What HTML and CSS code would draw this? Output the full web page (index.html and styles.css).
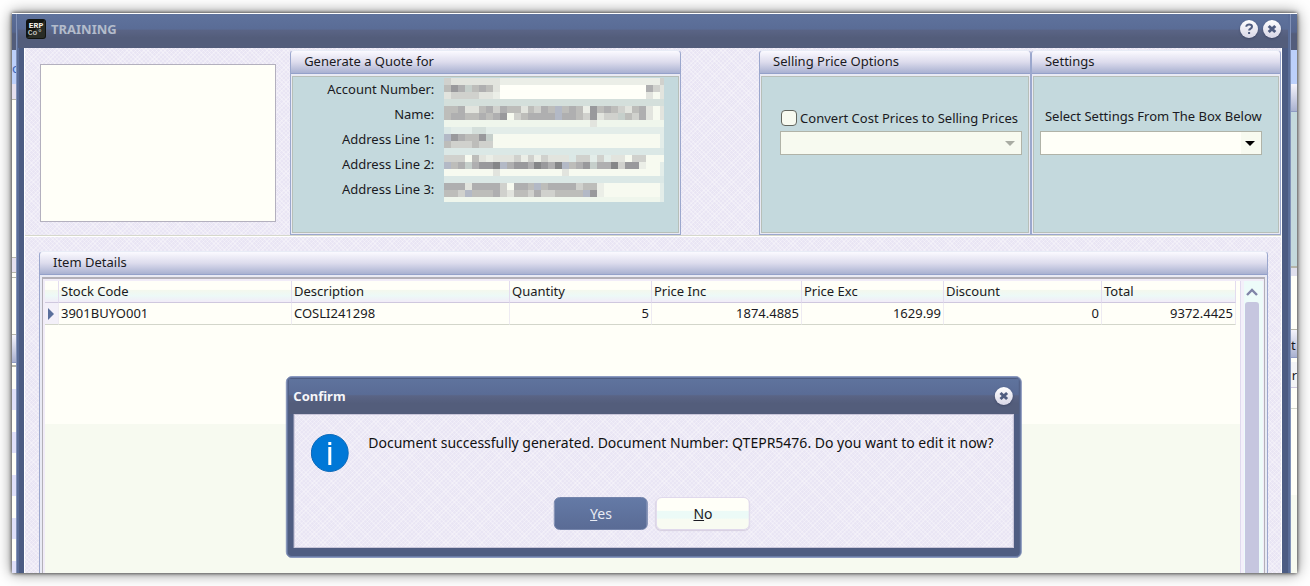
FILE: index.html
```html
<!DOCTYPE html>
<html lang="en">
<head>
    <meta charset="UTF-8">
    <meta name="viewport" content="width=device-width, initial-scale=1.0">
    <title>Training</title>
    <link rel="stylesheet" href="styles.css">
</head>
<body>

<div class="stage">
    <div class="edge edge-left">
        <div class="edge-title"></div>
        <div class="edge-menu">o</div>
        <div class="edge-texture"></div>
        <div class="edge-blank"></div>
        <div class="edge-texture edge-small"></div>
        <div class="edge-blank edge-short"></div>
        <div class="edge-heading"></div>
        <div class="edge-stripes"></div>
    </div>

    <main class="window">
        <header class="title-bar">
            <svg class="app-icon" width="20" height="20" viewBox="0 0 20 20" aria-hidden="true">
                <rect width="20" height="20" rx="3" fill="#11130f"/>
                <path d="M1 19L19 1V17a2 2 0 0 1-2 2z" fill="#292c26"/>
                <text x="10" y="9" text-anchor="middle" class="icon-text">ERP</text>
                <text x="9" y="16" text-anchor="middle" class="icon-text icon-text-soft">Co°</text>
            </svg>
            <h1>TRAINING</h1>
            <button class="round-btn" aria-label="Help">
                <svg width="18" height="18" viewBox="0 0 18 18"><path d="M6.3 6.7C6.3 3.6 12 3.7 12 6.7C12 8.6 9.1 8.5 9.1 10.6M9.1 12v2" fill="none" stroke="#505d80" stroke-width="2"/></svg>
            </button>
            <button class="round-btn" aria-label="Close">
                <svg width="18" height="18" viewBox="0 0 18 18"><path d="M5.7 6l6.6 6M12.3 6l-6.6 6" fill="none" stroke="#505d80" stroke-width="3"/></svg>
            </button>
        </header>

        <div class="content">
            <section class="top-area">
                <div class="preview"></div>

                <div class="panel quote-panel">
                    <h2>Generate a Quote for</h2>
                    <div class="panel-body quote-body">
                        <div class="labels">
                            <label for="account">Account Number:</label>
                            <label for="name">Name:</label>
                            <label for="address1">Address Line 1:</label>
                            <label for="address2">Address Line 2:</label>
                            <label for="address3">Address Line 3:</label>
                        </div>
                        <div class="fields">
                            <input type="text" id="account">
                            <input type="text" id="name">
                            <input type="text" id="address1">
                            <input type="text" id="address2">
                            <input type="text" id="address3">
                            <svg class="mosaic" id="mosaic" viewBox="0 0 221 124" preserveAspectRatio="none" shape-rendering="crispEdges" aria-hidden="true"></svg>
                        </div>
                    </div>
                </div>

                <div class="panel price-panel">
                    <h2>Selling Price Options</h2>
                    <div class="panel-body price-body">
                        <div class="check-row">
                            <input type="checkbox" id="convert">
                            <label for="convert">Convert Cost Prices to Selling Prices</label>
                        </div>
                        <div class="select-box disabled">
                            <select aria-label="Selling price" disabled><option></option></select>
                        </div>
                    </div>
                </div>

                <div class="panel settings-panel">
                    <h2>Settings</h2>
                    <div class="panel-body settings-body">
                        <label for="settings">Select Settings From The Box Below</label>
                        <div class="select-box">
                            <select id="settings"><option></option></select>
                        </div>
                    </div>
                </div>
            </section>

            <section class="panel items-panel">
                <h2>Item Details</h2>
                <div class="items-body">
                    <div class="grid">
                        <table>
                            <colgroup>
                                <col class="col-mark"><col class="col-stock"><col class="col-desc"><col class="col-qty">
                                <col class="col-inc"><col class="col-exc"><col class="col-disc"><col class="col-total">
                            </colgroup>
                            <thead>
                                <tr>
                                    <th></th>
                                    <th>Stock Code</th>
                                    <th>Description</th>
                                    <th>Quantity</th>
                                    <th>Price Inc</th>
                                    <th>Price Exc</th>
                                    <th>Discount</th>
                                    <th>Total</th>
                                </tr>
                            </thead>
                            <tbody>
                                <tr>
                                    <td class="mark"><svg width="6" height="12" viewBox="0 0 6 12" aria-hidden="true"><path d="M0 0l6 6-6 6z" fill="#5a6f9c"/></svg></td>
                                    <td>3901BUYO001</td>
                                    <td>COSLI241298</td>
                                    <td class="num">5</td>
                                    <td class="num">1874.4885</td>
                                    <td class="num">1629.99</td>
                                    <td class="num">0</td>
                                    <td class="num">9372.4425</td>
                                </tr>
                            </tbody>
                        </table>
                    </div>
                    <div class="scrollbar">
                        <svg width="12" height="8" viewBox="0 0 12 8" aria-hidden="true"><path d="M1 7l5-5 5 5" fill="none" stroke="#8084a8" stroke-width="2.4"/></svg>
                        <div class="thumb"></div>
                    </div>
                </div>
            </section>
        </div>

        <div class="dialog" role="dialog" aria-labelledby="dialog-title">
            <header class="dialog-title">
                <h2 id="dialog-title">Confirm</h2>
                <button class="round-btn" aria-label="Close dialog">
                    <svg width="18" height="18" viewBox="0 0 18 18"><path d="M5.7 6l6.6 6M12.3 6l-6.6 6" fill="none" stroke="#505d80" stroke-width="3"/></svg>
                </button>
            </header>
            <div class="dialog-body">
                <div class="message">
                    <svg width="38" height="38" viewBox="0 0 38 38" aria-hidden="true">
                        <circle cx="19" cy="19" r="18.5" fill="#0078d7" stroke="#0a68b8"/>
                        <path d="M19 13v18M19 8v3" stroke="#fff" stroke-width="3"/>
                    </svg>
                    <p>Document successfully generated. Document Number: QTEPR5476. Do you want to edit it now?</p>
                </div>
                <div class="actions">
                    <button class="btn btn-yes"><u>Y</u>es</button>
                    <button class="btn btn-no"><u>N</u>o</button>
                </div>
            </div>
        </div>
    </main>

    <div class="edge edge-right">
        <div class="edge-title"></div>
        <div class="edge-menu"></div>
        <div class="edge-heading"></div>
        <div class="edge-teal"></div>
        <div class="edge-blank"></div>
        <div class="edge-heading edge-caption">t</div>
        <div class="edge-column">ur</div>
        <div class="edge-line"></div>
        <div class="edge-rest"></div>
    </div>
</div>

<script>
// one letter per 7px cell
const colors = {
    x: '#858688', a: '#99999c', b: '#afafb0', c: '#bdbdba', d: '#d0d1cd', e: '#e2e4de',
    f: '#ebeee7', g: '#eff6ec', h: '#f7faf0', w: '#fffff8', k: '#dbe8e6', m: '#e3ede9',
    n: '#d4dfdb', s: '#b3b9c6', t: '#c6cfcb'
};
const rows = [
    'deeeeeee' + 'f'.repeat(23) + 'd',
    'cabtcbce' + 'w'.repeat(21) + 'bde',
    'eddddeef' + 'w'.repeat(21) + 'ehe',
    'n'.repeat(32),
    'ccbeecbdbccecdbcscbcfacbcdecbehe',
    'cbbccbcbahdcbbbbsbbcdaeddtcdbehe',
    'g'.repeat(21) + 'e' + 'g'.repeat(10),
    'kmmmnn' + 'm'.repeat(26),
    'sabccat' + 'h'.repeat(24) + 'm',
    'cdddcdd' + 'h'.repeat(24) + 'm',
    'k'.repeat(32),
    'dddhcefeeedfdfdeeekddmdmeehddhhhm',
    'scbtbaaxsbaabxabxscbatbbxdaafhhm',
    'hhhhhhhe' + 'h'.repeat(9) + 'e' + 'h'.repeat(13) + 'm',
    'k'.repeat(32),
    'bbbebbbbdhbbcscbbbbdccfhhhhhhhhm',
    'ccdscccbdeccdbddccccsafhhhhhhhhm',
    'g'.repeat(31) + 'm'
];
let cells = '';
rows.forEach((row, y) => {
    [...row].forEach((key, x) => {
        cells += `<rect x="${x * 7}" y="${y * 7}" width="7" height="7" fill="${colors[key]}"/>`;
    });
});
document.getElementById('mosaic').innerHTML = cells;
</script>

</body>
</html>
```
FILE: styles.css
```css
* {
    box-sizing: border-box;
}

body {
    margin: 0;
    padding: 13px 13px 13px 12px;
    height: 100vh;
    display: flex;
    background: #fff;
    color: #1a1a22;
    font-family: "Noto Sans", sans-serif;
    font-size: 13px;
    line-height: 18px;
}

h1, h2, p {
    margin: 0;
}

h1, h2 {
    font-size: 13px;
}

input, select, button {
    font: inherit;
    color: inherit;
    margin: 0;
}

.stage {
    flex: 1;
    min-width: 0;
    display: flex;
    border-top: 1px solid #fff;
    background: #fffff8;
    box-shadow: 0 0 4px rgba(0, 0, 0, 0.8), 0 0 14px rgba(0, 0, 0, 0.5);
}

/* slices of the window behind */
.edge {
    display: flex;
    flex-direction: column;
    overflow: hidden;
}

.edge-left {
    width: 4px;
}

.edge-right {
    width: 6px;
}

.edge > div {
    flex: none;
}

.edge-title {
    height: 36px;
    background: linear-gradient(#5b6f99, #56668e 50%, #535d7b 55%);
}

.edge-menu {
    height: 34px;
    background: #bcd0fb;
    color: #3a66b8;
    line-height: 36px;
}

.edge-texture {
    height: 16px;
    background: #e6e1ef;
    border-bottom: 1px solid #b5b5a8;
}

.edge-blank {
    height: 157px;
}

.edge-small {
    border-top: 1px solid #b5b5a8;
}

.edge-left .edge-short {
    height: 58px;
    margin-top: 4px;
    border: 1px solid #b5b5a8;
    border-width: 1px 0;
}

.edge-heading {
    height: 28px;
    background: linear-gradient(#f5f4fc, #a9b1d0);
    border-bottom: 1px solid #8f9bc4;
}

.edge > .edge-stripes {
    flex: 1;
    background: repeating-linear-gradient(#fffff8 0 22px, #dfe0fa 22px 43px);
    border-top: 2px solid #b5b5a8;
    margin-top: 2px;
}

.edge-teal {
    height: 156px;
    background: #c4d9dd;
    border-bottom: 2px solid #b5b5a8;
}

.edge-right .edge-blank {
    height: 62px;
    border-top: 8px solid #e0e0ee;
    border-bottom: 1px solid #b5b5a8;
}

.edge-caption {
    line-height: 30px;
}

.edge-column {
    height: 26px;
    margin-top: 4px;
    line-height: 26px;
    direction: rtl;
    background: #f3f4f6;
    border-bottom: 1px solid #cfc8de;
}

.edge-line {
    height: 21px;
    border-bottom: 1px solid #d5d8cc;
}

.edge > .edge-rest {
    flex: 1;
    background: linear-gradient(#fffff8 86px, #f7faf0 86px);
}

/* main window */
.window {
    position: relative;
    flex: 1;
    min-width: 0;
    display: flex;
    flex-direction: column;
    padding: 0 9px 0 8px;
    background: linear-gradient(90deg, #8292b8 1px, #5a6d98 1px 3px, #4c5c83 3px calc(100% - 3px), #5a6d98 calc(100% - 3px) calc(100% - 1px), #8292b8 calc(100% - 1px));
}

.title-bar, .dialog-title {
    display: flex;
    align-items: center;
    background: linear-gradient(#5f739d, #5a6c96 44%, #5a6485 48%, #535d7b 70%);
}

.title-bar {
    height: 34px;
    margin: 0 -6px;
    padding: 0 7px 4px 8px;
    gap: 5px;
}

.title-bar h1 {
    flex: 1;
    color: #b3bccb;
}

.icon-text {
    font-family: "Liberation Mono", monospace;
    font-size: 8px;
    font-weight: bold;
    fill: #f4f4f0;
}

.icon-text-soft {
    fill: #b9bab4;
}

.round-btn {
    width: 18px;
    height: 18px;
    padding: 0;
    border: none;
    border-radius: 50%;
    background: linear-gradient(#fff, #d8d6e6);
    box-shadow: 0 1px 2px #3f4866;
    display: flex;
}

.content, .dialog-body {
    background-color: #e9e5f4;
    background-image:
        repeating-linear-gradient(45deg, rgba(255, 255, 255, 0.3) 0 1px, transparent 1px 3px),
        repeating-linear-gradient(-45deg, rgba(255, 255, 255, 0.3) 0 1px, transparent 1px 3px);
}

.content {
    flex: 1;
    min-height: 0;
    display: flex;
    flex-direction: column;
    border: 1px solid #fff;
    border-width: 0 1px;
    overflow: hidden;
}

.top-area {
    flex: none;
    display: flex;
    padding: 2px 0 0 15px;
    border-bottom: 1px solid #d6d8cb;
    box-shadow: 0 1px #fff;
}

.preview {
    flex: 236 1 0;
    margin: 14px 14px 13px 0;
    background: #fffff8;
    border: 1px solid #b3b0be;
}

.panel {
    display: flex;
    flex-direction: column;
    background: #e9eaf4;
    border: 1px solid #9ba7cd;
    border-top-color: #e8ecf6;
    border-radius: 4px 4px 0 0;
}

.panel h2 {
    height: 23px;
    padding: 1px 13px;
    font-weight: normal;
    background: linear-gradient(#fbfaff, #dddced 50%, #a9b1d1);
    border-bottom: 1px solid #94a1ca;
    border-radius: 4px 4px 0 0;
}

.panel-body {
    flex: 1;
    margin: 2px 1px 1px;
    border: 1px solid #b7bfb8;
    background: #c4d9dd;
}

.quote-panel {
    flex: 392 1 0;
    margin-right: 78px;
}

.price-panel {
    flex: 272 1 0;
}

.settings-panel {
    flex: 250 1 0;
}

.quote-body {
    display: flex;
    gap: 10px;
    padding: 1px 14px 29px 0;
}

.labels {
    flex: 142 1 0;
    display: flex;
    flex-direction: column;
    text-align: right;
}

.labels label {
    line-height: 22px;
    height: 25px;
}

.fields {
    position: relative;
    flex: 221 1 0;
    display: flex;
    flex-direction: column;
    gap: 4px;
}

.fields input {
    width: 100%;
    height: 21px;
    border: none;
    background: #f7faf0;
}

/* blurred-out customer data */
.mosaic {
    position: absolute;
    top: 0;
    left: 0;
    width: 100%;
    height: 124px;
}

.price-body {
    padding: 30px 6px 0 18px;
}

.settings-body {
    padding: 30px 16px 0 6px;
}

.settings-body label {
    display: block;
    padding-left: 5px;
    margin-bottom: 6px;
    white-space: nowrap;
}

.check-row {
    display: flex;
    align-items: center;
    gap: 3px;
    height: 22px;
    margin-bottom: 2px;
    padding-left: 1px;
    white-space: nowrap;
}

.check-row input {
    appearance: none;
    flex: none;
    width: 16px;
    height: 16px;
    border: 1px solid #62665f;
    border-radius: 4px;
    background: #f7faf0;
}

.select-box {
    position: relative;
}

.select-box select {
    appearance: none;
    display: block;
    width: 100%;
    height: 24px;
    border: 1px solid #b0b3a8;
    border-radius: 0;
    background: linear-gradient(#f7faf0, #f7faf0) right / 20px no-repeat #fffff8;
    opacity: 1;
}

.select-box::after {
    content: "";
    position: absolute;
    top: 10px;
    right: 7px;
    border: 5px solid transparent;
    border-top-color: #000;
    border-bottom: none;
    pointer-events: none;
}

.disabled select {
    background: #f7faf0;
}

.disabled::after {
    border-top-color: #a9aca3;
}

/* item table */
.items-panel {
    flex: 1;
    min-height: 0;
    margin: 15px 13px 0 14px;
    border-bottom: none;
}

.items-body {
    flex: 1;
    min-height: 0;
    display: flex;
    margin: 2px 2px 0;
    border: 1px solid #b3b0b8;
    border-width: 2px 1px 0;
    padding: 2px 1px 0 2px;
    background: #f1ecf8;
}

.grid {
    flex: 1;
    padding-right: 4px;
    background: linear-gradient(#fffff8 143px, #f7faf0 143px);
}

table {
    width: 100%;
    table-layout: fixed;
    border-collapse: separate;
    border-spacing: 0;
}

.col-mark {
    width: 14px;
}

.col-stock {
    width: 233px;
}

.col-desc {
    width: 218px;
}

.col-qty, .col-exc {
    width: 142px;
}

.col-inc {
    width: 150px;
}

.col-disc {
    width: 158px;
}

th, td {
    height: 22px;
    padding: 0 2px;
    text-align: left;
    font-weight: normal;
    line-height: 21px;
    white-space: nowrap;
}

th {
    background: linear-gradient(#fffff8 40%, #f3f8ee 45%, #edf9f7 70%, #f1ecf8);
    border-right: 1px solid #e3dcef;
    border-bottom: 1px solid #cfc8de;
}

td {
    border-right: 1px solid #eeebf2;
    border-bottom: 1px solid #d3d6cb;
}

.mark {
    background: #f3f0f9;
    padding: 0 3px;
}

.mark svg {
    display: block;
}

.num {
    text-align: right;
}

.scrollbar {
    width: 23px;
    display: flex;
    flex-direction: column;
    align-items: center;
    padding: 7px 4px 0;
    background: linear-gradient(90deg, #e0daee 1px, #f4f0fa 1px 4px, #edfbf9 4px);
}

.scrollbar svg {
    flex: none;
}

.thumb {
    flex: 1;
    width: 14px;
    margin-top: 6px;
    background: #c6c6df;
    border-radius: 3px 3px 0 0;
}

/* confirm dialog */
.dialog {
    position: absolute;
    bottom: 15px;
    left: 50%;
    transform: translateX(-50%);
    padding: 2px 7px 9px;
    border: 1px solid #8c9ac0;
    border-radius: 6px;
    background: #4f5d82;
    box-shadow: inset 0 0 0 1px #6a7ca6;
}

.dialog-title {
    height: 35px;
    margin: 0 -5px;
    padding: 0 6px 2px 5px;
    color: #f5f6fa;
}

.dialog-title h2 {
    flex: 1;
}

.dialog-body {
    border: 1px solid #c9c6da;
    padding: 19px 19px 17px 16px;
}

.message {
    display: flex;
    gap: 20px;
}

.message p {
    font-size: 14px;
    line-height: 18px;
    white-space: nowrap;
    color: #111;
}

.actions {
    display: flex;
    justify-content: center;
    gap: 8px;
    margin-top: 25px;
}

.btn {
    width: 94px;
    height: 33px;
    border-radius: 6px;
    font-size: 14px;
}

.btn-yes {
    border: 1px solid #7484ab;
    background: linear-gradient(#647aa6, #5a6b95);
    color: #e8ebf4;
}

.btn-no {
    border: 1px solid #e0d9ec;
    background: linear-gradient(#fffff8 40%, #ecfaf7 42% 65%, #f8fbf2 68%);
    box-shadow: 0 1px 1px #d6cfe0;
}
```
